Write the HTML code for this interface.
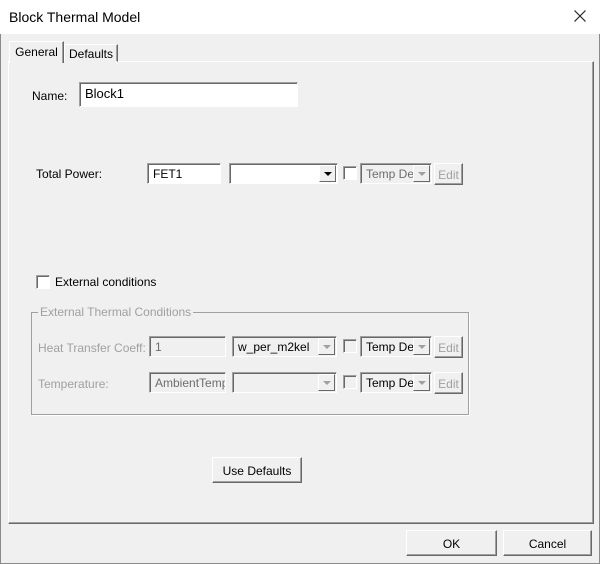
<!DOCTYPE html>
<html><head><style>
*{box-sizing:border-box;margin:0;padding:0}
body{width:600px;height:564px;background:#f0f0f0;font-family:"Liberation Sans",sans-serif;font-size:12px;color:#000;position:relative;overflow:hidden}
.a{position:absolute}
.win{left:0;top:0;width:600px;height:564px;border:1px solid #8a8a8a;border-top:none}
.title{left:0;top:0;width:600px;height:34px;background:#fff;font-size:14px}
.panel{left:8px;top:61px;width:586px;height:463px;border:1px solid;border-color:#fff #696969 #696969 #fff;box-shadow:inset -1px -1px 0 #a0a0a0}
.tab{border:1px solid;border-color:#fff #696969 transparent #fff;background:#f0f0f0;text-align:center;box-shadow:inset -1px 0 0 #a0a0a0}
.sunk{border:1px solid;border-color:#a0a0a0 #fff #fff #a0a0a0;box-shadow:inset 1px 1px 0 #696969;background:#fff;padding:3px 0 0 5px;white-space:nowrap;overflow:hidden}
.dis{background:#f0f0f0;color:#6d6d6d}
.btn{border:1px solid;border-color:#fff #696969 #696969 #fff;box-shadow:inset -1px -1px 0 #a0a0a0;background:#f0f0f0;text-align:center}
.chk{width:14px;height:14px;border:1px solid;border-color:#a0a0a0 #fff #fff #a0a0a0;box-shadow:inset 1px 1px 0 #696969;background:#fff}
.chk.d{background:#f0f0f0}
.dd{position:absolute;right:1px;top:1px;width:17px;bottom:1px;border:1px solid;border-color:#fff #696969 #696969 #fff;background:#f0f0f0}
.dd:after{content:"";position:absolute;left:4px;top:6px;border-left:4px solid transparent;border-right:4px solid transparent;border-top:4px solid #000}
.dd.g:after{border-top-color:#a0a0a0}
.gt{color:#a0a0a0}
</style></head><body>
<div class="a win"></div>
<div class="a title"><span class="a" style="left:9px;top:9px">Block Thermal Model</span>
<svg class="a" style="left:574px;top:10px" width="12" height="12"><path d="M0.5 0.5L11.5 11.5M11.5 0.5L0.5 11.5" stroke="#222" stroke-width="1.2"/></svg></div>
<div class="a panel"></div>
<div class="a tab" style="left:64px;top:44px;width:54px;height:18px;padding-top:2px">Defaults</div>
<div class="a tab" style="left:9px;top:41px;width:55px;height:22px;padding-top:3px;border-bottom:none">General</div>

<span class="a" style="left:32px;top:89px">Name:</span>
<div class="a sunk" style="left:79px;top:82px;width:219px;height:25px;font-size:13px">Block1</div>

<span class="a" style="left:36px;top:167px">Total Power:</span>
<div class="a sunk" style="left:147px;top:163px;width:74px;height:21px">FET1</div>
<div class="a sunk" style="left:229px;top:163px;width:109px;height:21px"><div class="dd"></div></div>
<div class="a chk" style="left:343px;top:166px"></div>
<div class="a sunk dis" style="left:360px;top:163px;width:72px;height:21px">Temp Dep<div class="dd g"></div></div>
<div class="a btn gt" style="left:434px;top:163px;width:29px;height:22px;padding-top:4px">Edit</div>

<div class="a chk" style="left:36px;top:275px"></div>
<span class="a" style="left:55px;top:275px">External conditions</span>

<div class="a" style="left:31px;top:312px;width:438px;height:103px;border:1px solid #a0a0a0;box-shadow:1px 1px 0 #fff"></div>
<span class="a gt" style="left:38px;top:305px;background:#f0f0f0;padding:0 2px">External Thermal Conditions</span>

<span class="a gt" style="left:38px;top:341px">Heat Transfer Coeff:</span>
<div class="a sunk dis" style="left:149px;top:336px;width:77px;height:21px">1</div>
<div class="a sunk dis" style="left:232px;top:336px;width:105px;height:21px;color:#000">w_per_m2kel<div class="dd g"></div></div>
<div class="a chk d" style="left:343px;top:339px"></div>
<div class="a sunk dis" style="left:360px;top:336px;width:72px;height:21px;color:#000">Temp Dep<div class="dd g"></div></div>
<div class="a btn gt" style="left:434px;top:336px;width:29px;height:22px;padding-top:4px">Edit</div>

<span class="a gt" style="left:38px;top:377px">Temperature:</span>
<div class="a sunk dis" style="left:149px;top:372px;width:77px;height:21px">AmbientTemp</div>
<div class="a sunk dis" style="left:232px;top:372px;width:105px;height:21px"><div class="dd g"></div></div>
<div class="a chk d" style="left:343px;top:375px"></div>
<div class="a sunk dis" style="left:360px;top:372px;width:72px;height:21px;color:#000">Temp Dep<div class="dd g"></div></div>
<div class="a btn gt" style="left:434px;top:372px;width:29px;height:22px;padding-top:4px">Edit</div>

<div class="a btn" style="left:212px;top:457px;width:90px;height:26px;padding-top:6px">Use Defaults</div>
<div class="a btn" style="left:406px;top:530px;width:91px;height:26px;padding-top:6px">OK</div>
<div class="a btn" style="left:503px;top:530px;width:89px;height:26px;padding-top:6px">Cancel</div>
</body></html>
